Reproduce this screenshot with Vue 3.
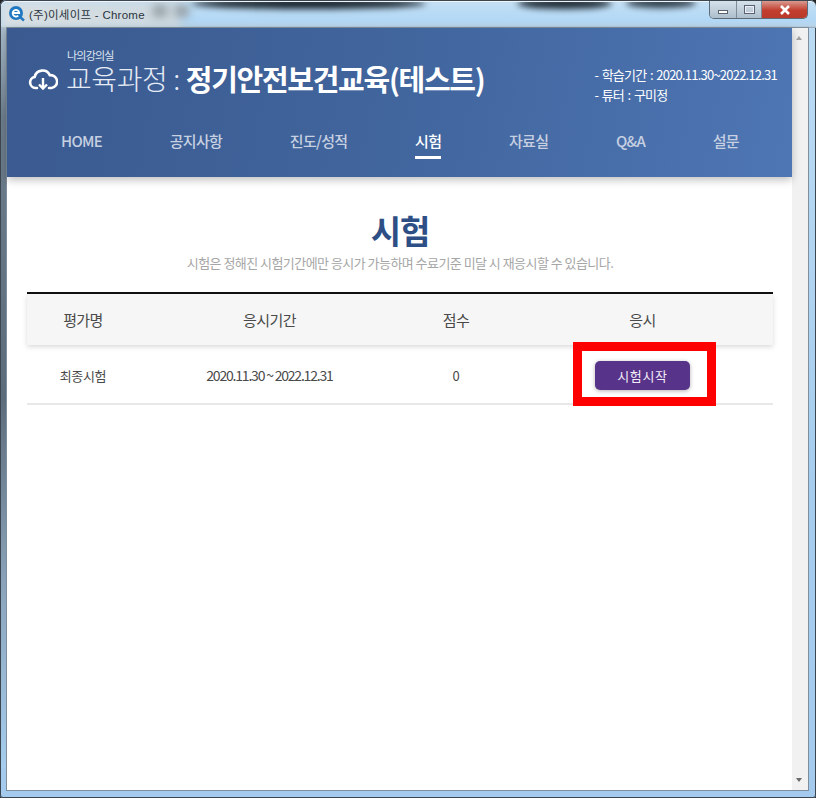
<script setup>
const tabs = ['HOME', '공지사항', '진도/성적', '시험', '자료실', 'Q&A', '설문']
const activeTab = '시험'
</script>

<template>
  <div class="window">
    <span class="edge"></span>
    <div class="titlebar">
      <div class="glass">
        <i class="smear s1"></i><i class="smear s2"></i><i class="smear s3"></i><i class="smear s4"></i><i class="smear s5"></i>
      </div>
      <svg class="logo" width="18" height="18" viewBox="0 0 18 18">
        <circle cx="8" cy="8" r="7" fill="#1f78c1" />
        <path d="M4.6 8h6.6a3.3 3.3 0 1 0-1 2.6" fill="none" stroke="#fff" stroke-width="1.8" />
        <path d="M12 12l4 3.5" stroke="#1f78c1" stroke-width="2.4" />
      </svg>
      <span class="wintitle">(주)이세이프 - Chrome</span>
      <div class="controls">
        <div class="ctl"><span class="min"></span></div>
        <div class="ctl"><span class="max"></span></div>
        <div class="ctl close"><svg width="14" height="10" viewBox="0 0 14 10"><path d="M3 1l8 8M11 1l-8 8" stroke="#fff" stroke-width="2.6" /></svg></div>
      </div>
    </div>
    <div class="client">
      <div class="viewport">
        <header class="hero">
          <div class="hero-top">
            <div class="course">
              <div class="crumb">나의강의실</div>
              <div class="course-line">
                <svg class="cloud" width="30" height="23" viewBox="0 0 30 23">
                  <path d="M9 20H7.5a5.6 5.6 0 0 1-.8-11.1A8 8 0 0 1 21.8 7.2 6.3 6.3 0 0 1 23.5 20H21" fill="none" stroke="#fff" stroke-width="2.6" stroke-linecap="round" />
                  <path d="M15 10v10M11 16.5l4 4 4-4" fill="none" stroke="#fff" stroke-width="2.4" />
                </svg>
                <span class="label">교육과정 :</span>
                <strong class="name">정기안전보건교육(테스트)</strong>
              </div>
            </div>
            <ul class="meta">
              <li>- 학습기간 : 2020.11.30~2022.12.31</li>
              <li>- 튜터 : 구미정</li>
            </ul>
          </div>
          <nav class="tabs">
            <a v-for="t in tabs" :key="t" class="tab" :class="{ active: t === activeTab }">{{ t }}</a>
          </nav>
        </header>
        <main class="page">
          <h1>시험</h1>
          <p class="sub">시험은 정해진 시험기간에만 응시가 가능하며 수료기준 미달 시 재응시할 수 있습니다.</p>
          <div class="table">
            <div class="row head">
              <div>평가명</div><div>응시기간</div><div>점수</div><div>응시</div>
            </div>
            <div class="row body">
              <div>최종시험</div><div class="tight">2020.11.30 ~ 2022.12.31</div><div>0</div>
              <div class="action">
                <button class="start">시험시작</button>
                <span class="mark"></span>
              </div>
            </div>
          </div>
        </main>
      </div>
      <div class="scrollbar">
        <span class="up"></span>
        <span class="down"></span>
      </div>
    </div>
  </div>
</template>

<style>
html, body { margin: 0; padding: 0; overflow: hidden; background: #222; }
</style>

<style scoped>
* { box-sizing: border-box; }
.window {
  width: 816px; height: 798px; display: flex; flex-direction: column;
  background: linear-gradient(180deg, #bcdcf4 0%, #a6cdee 60%, #a4cbee 100%);
  font-family: "Noto Sans CJK KR", "Noto Sans", sans-serif;
  padding: 0 8px 8px 7px; overflow: hidden; position: relative;
  border-radius: 6px 6px 3px 3px;
  box-shadow: inset 0 0 0 1px #3c4650;
}
.edge { position: absolute; left: 1px; top: 28px; width: 5px; height: 740px;
  background: linear-gradient(180deg, #a9bccb 0%, #6d7d8c 12%, #5d6c7b 50%, #8aa3ba 75%, #a6cdee 100%); }
.titlebar { height: 28px; flex: none; display: flex; align-items: center; position: relative; }
.glass { position: absolute; inset: 1px -8px 0 -6px; overflow: hidden; border-top: 1px solid #eef4f8;
  background: linear-gradient(180deg, #c3dff4 0%, #b2d8f6 70%, #b8d4e8 93%, #8fa0ae 100%); border-radius: 6px 6px 0 0; }
.smear { position: absolute; filter: blur(3px); }
.s1 { left: 0; top: 0; width: 180px; height: 27px; background: linear-gradient(90deg, #d8dfe2, #cdd9e0); filter: blur(4px); }
.s2 { left: 190px; top: -4px; width: 235px; height: 11px; background: #1a2630; border-radius: 50%; }
.s3 { left: 516px; top: -4px; width: 95px; height: 11px; background: #16222c; border-radius: 50%; opacity: .95; }
.s5 { left: 625px; top: -4px; width: 70px; height: 10px; background: #1c2a35; border-radius: 50%; opacity: .9; }
.s4 { left: 152px; top: 3px; width: 14px; height: 12px; background: #97a1a8; filter: blur(4px); box-shadow: 22px 0 0 #97a1a8; }
.logo { position: relative; margin-left: 1px; margin-top: -1px; }
.wintitle { position: relative; font-family: "Liberation Sans", "Noto Sans CJK KR", sans-serif; font-size: 11.5px; margin-left: 3px; letter-spacing: .26px; color: #2b3540; }
.controls { position: absolute; right: 0; top: 1px; display: flex; height: 18px; border: 1px solid #5d6b78; border-top: 0; border-radius: 0 0 5px 5px; overflow: hidden; }
.ctl { width: 27px; display: flex; align-items: center; justify-content: center;
  background: linear-gradient(180deg, #d5e2ec, #aebecb); border-right: 1px solid #7d8c99; }
.ctl:nth-child(2) { width: 25px; }
.close { width: 45px; border-right: 0; background: linear-gradient(180deg, #d99a90, #c23e2e 55%, #b93a2b); }
.min { width: 10px; height: 4px; background: #fff; border: 1px solid #59636d; margin-top: 4px; }
.max { width: 11px; height: 9px; border: 1px solid #59636d; background: transparent; outline: 1px solid #eef; outline-offset: -2px; }
.client { flex: 1; min-height: 0; display: flex; background: #fff; outline: 1px solid #7f8e9c; position: relative; }
.viewport { flex: 1; min-width: 0; display: flex; flex-direction: column; background: #fff; }
.scrollbar { width: 16px; flex: none; background: #f1f1f1; position: relative; }
.up, .down { position: absolute; left: 4px; width: 0; height: 0; border-left: 3.5px solid transparent; border-right: 3.5px solid transparent; }
.up { top: 8px; border-bottom: 4px solid #a3a3a3; }
.down { bottom: 8px; border-top: 4px solid #6a6a6a; }
.hero { height: 149px; flex: none; background: linear-gradient(100deg, #3a5a90 0%, #41659d 50%, #4e76b4 100%); box-shadow: 0 3px 8px rgba(0,0,0,.25); color: #fff; padding: 0 15px 0 23px; position: relative; z-index: 1; }
.hero-top { display: flex; justify-content: space-between; height: 77px; }
.course { padding-top: 20px; }
.crumb { font-size: 11px; line-height: 14px; letter-spacing: -.8px; margin-left: 37px; color: #dfe6f2; }
.course-line { display: flex; align-items: center; height: 30px; margin-top: 1px; }
.cloud { flex: none; margin-top: 2px; margin-left: -2px; }
.label { font-size: 28px; line-height: 30px; font-weight: 300; letter-spacing: -.4px; margin-left: 8px; color: #e6ecf5; white-space: nowrap; }
.name { font-size: 29px; line-height: 30px; font-weight: 700; letter-spacing: -1.3px; margin-left: 6px; white-space: nowrap; }
.meta { list-style: none; margin: 0; padding: 37px 0 0; font-size: 13px; line-height: 20px; letter-spacing: -.78px; word-spacing: 1.4px; font-weight: 400; white-space: nowrap; }
.tabs { display: flex; justify-content: space-between; padding: 0 53px 0 54px; margin-left: -23px; margin-right: -15px; }
.tab { text-align: center; font-size: 15px; font-weight: 500; letter-spacing: -.7px; color: #c6d0e1; line-height: 22px; position: relative; height: 72px; padding-top: 25px; }
.tab.active { color: #fff; }
.tab.active::after { content: ""; position: absolute; left: 0; right: 0; top: 51px; height: 3px; background: #fff; }
.page { padding: 0 19px 0 20px; flex: 1; }
h1 { margin: 30px 0 0; text-align: center; font-size: 33px; line-height: 46px; font-weight: 700; color: #2d4f85; letter-spacing: -1px; }
.sub { margin: 1px 0 0; text-align: center; font-size: 13px; line-height: 18px; color: #a6a6a6; letter-spacing: -.54px; font-weight: 400; }
.table { margin-top: 20px; border-top: 2px solid #111; }
.row { display: grid; grid-template-columns: 15% 35% 15% 35%; align-items: center; text-align: center; color: #4a4a4a; }
.head { height: 51px; background: #f6f6f6; font-size: 15px; box-shadow: 0 2px 5px rgba(0,0,0,.15); letter-spacing: -.6px; position: relative; }
.body { height: 60px; padding-top: 2px; border-bottom: 2px solid #e8e8e8; font-size: 13px; letter-spacing: -.4px; }
.tight { letter-spacing: -1.2px; font-size: 14px; }
.action { position: relative; display: flex; justify-content: center; }
.start { width: 95px; height: 29px; border: 0; border-radius: 5px; background: #58338a; color: #f2edf8; font: inherit; font-size: 13px; letter-spacing: .6px; box-shadow: 0 1px 4px rgba(0,0,0,.3); padding: 0; }
.mark { position: absolute; left: 50%; top: 50%; width: 143px; height: 64px; transform: translate(-69px, -33px); border: 9px solid #fe0000; pointer-events: none; }
</style>
